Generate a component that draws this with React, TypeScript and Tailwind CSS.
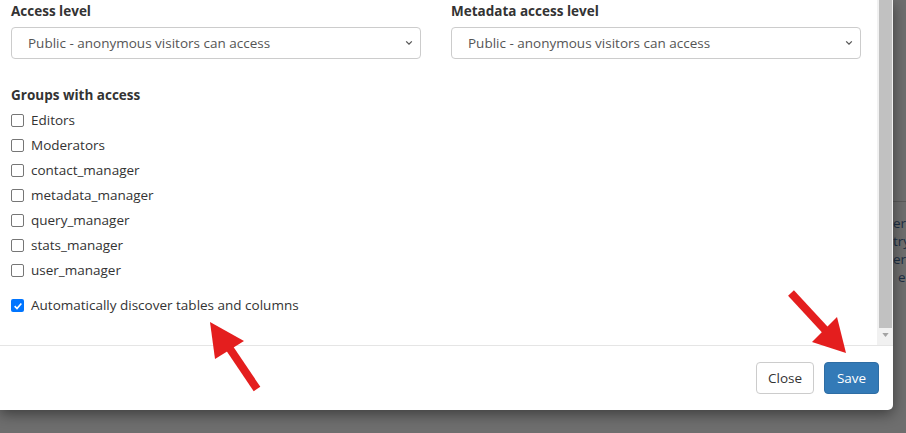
import React from "react";

const groups = [
  "Editors",
  "Moderators",
  "contact_manager",
  "metadata_manager",
  "query_manager",
  "stats_manager",
  "user_manager",
];

function Check({ checked = false }: { checked?: boolean }) {
  if (checked) {
    return (
      <span className="flex h-[13px] w-[13px] shrink-0 items-center justify-center rounded-[2px] bg-[#0075ff]">
        <svg viewBox="0 0 12 12" className="h-[10px] w-[10px]">
          <path d="M2 6.2 L4.8 9 L10 3" fill="none" stroke="#fff" strokeWidth="2" />
        </svg>
      </span>
    );
  }
  return <span className="h-[13px] w-[13px] shrink-0 rounded-[2px] border border-[#767676] bg-white" />;
}

function SelectBox() {
  return (
    <div className="mt-[6px] flex h-[32px] w-[410px] items-center justify-between rounded-[4px] border border-[#cccccc] bg-white pl-[16px] pr-[7px] text-[13.5px] text-[#555555]">
      <span>Public - anonymous visitors can access</span>
      <svg viewBox="0 0 10 10" className="h-[8px] w-[8px]">
        <path d="M1.5 3 L5 6.5 L8.5 3" fill="none" stroke="#555" strokeWidth="1.6" />
      </svg>
    </div>
  );
}

export default function App() {
  return (
    <div
      className="relative flex h-[433px] w-[906px] overflow-hidden bg-[#6e6e6e] text-[#333333]"
      style={{ fontFamily: '"Open Sans", "Noto Sans", sans-serif' }}
    >
      {/* modal */}
      <div className="z-10 flex h-[410px] w-[893px] shrink-0 flex-col rounded-br-[5px] bg-white shadow-[0_4px_14px_rgba(0,0,0,0.45)]">
        <div className="flex h-[345px]">
          <div className="flex-1 pl-[11px] pt-[1px]">
            <div className="flex gap-[30px]">
              <div>
                <div className="text-[13.5px] font-bold leading-[20px]">Access level</div>
                <SelectBox />
              </div>
              <div>
                <div className="text-[13.5px] font-bold leading-[20px]">Metadata access level</div>
                <SelectBox />
              </div>
            </div>
            <div className="mt-[26px] text-[13.5px] font-bold leading-[20px]">Groups with access</div>
            <div className="mt-[3px] flex flex-col">
              {groups.map((g) => (
                <label key={g} className="flex h-[25px] items-center gap-[7px] text-[13.5px]">
                  <Check />
                  <span>{g}</span>
                </label>
              ))}
            </div>
            <label className="mt-[10px] flex h-[25px] items-center gap-[7px] text-[13.5px]">
              <Check checked />
              <span>Automatically discover tables and columns</span>
            </label>
          </div>
          {/* scrollbar */}
          <div className="flex w-[16px] flex-col items-center bg-[#f1f1f1] pb-[6px]">
            <div className="h-[328px] w-[13px] bg-[#c1c1c1]" />
            <svg viewBox="0 0 8 5" className="mt-[5px] h-[4px] w-[7px]">
              <path d="M0 0 L8 0 L4 5 Z" fill="#a3a3a3" />
            </svg>
          </div>
        </div>
        <div className="flex flex-1 items-center justify-end gap-[10px] border-t border-[#e5e5e5] pr-[14px]">
          <button className="h-[32px] w-[58px] rounded-[4px] border border-[#cccccc] bg-white text-[13.5px] text-[#333333]">
            Close
          </button>
          <button className="h-[32px] w-[55px] rounded-[4px] border border-[#2e6da4] bg-[#337ab7] text-[13.5px] text-white">
            Save
          </button>
        </div>
      </div>

      {/* page behind the overlay */}
      <div className="flex flex-1 flex-col overflow-hidden pt-[201px] text-[13.5px] leading-[18px] text-[#1d2f44]">
        <div className="mb-[12px] h-px w-full bg-[#5a5a5a]" />
        <span>er</span>
        <span>try</span>
        <span>er</span>
        <span className="pl-[5px]">e</span>
      </div>

      {/* annotation arrows */}
      <svg className="pointer-events-none absolute left-0 top-0 z-20 h-[433px] w-[906px]" viewBox="0 0 906 433">
        <line x1="257" y1="389" x2="226" y2="343" stroke="#e41e1e" strokeWidth="8" />
        <polygon points="210,322 244,341 215,359" fill="#e41e1e" />
        <line x1="791" y1="293" x2="828" y2="333" stroke="#e41e1e" strokeWidth="8" />
        <polygon points="846,353 837,317 812,342" fill="#e41e1e" />
      </svg>
    </div>
  );
}
